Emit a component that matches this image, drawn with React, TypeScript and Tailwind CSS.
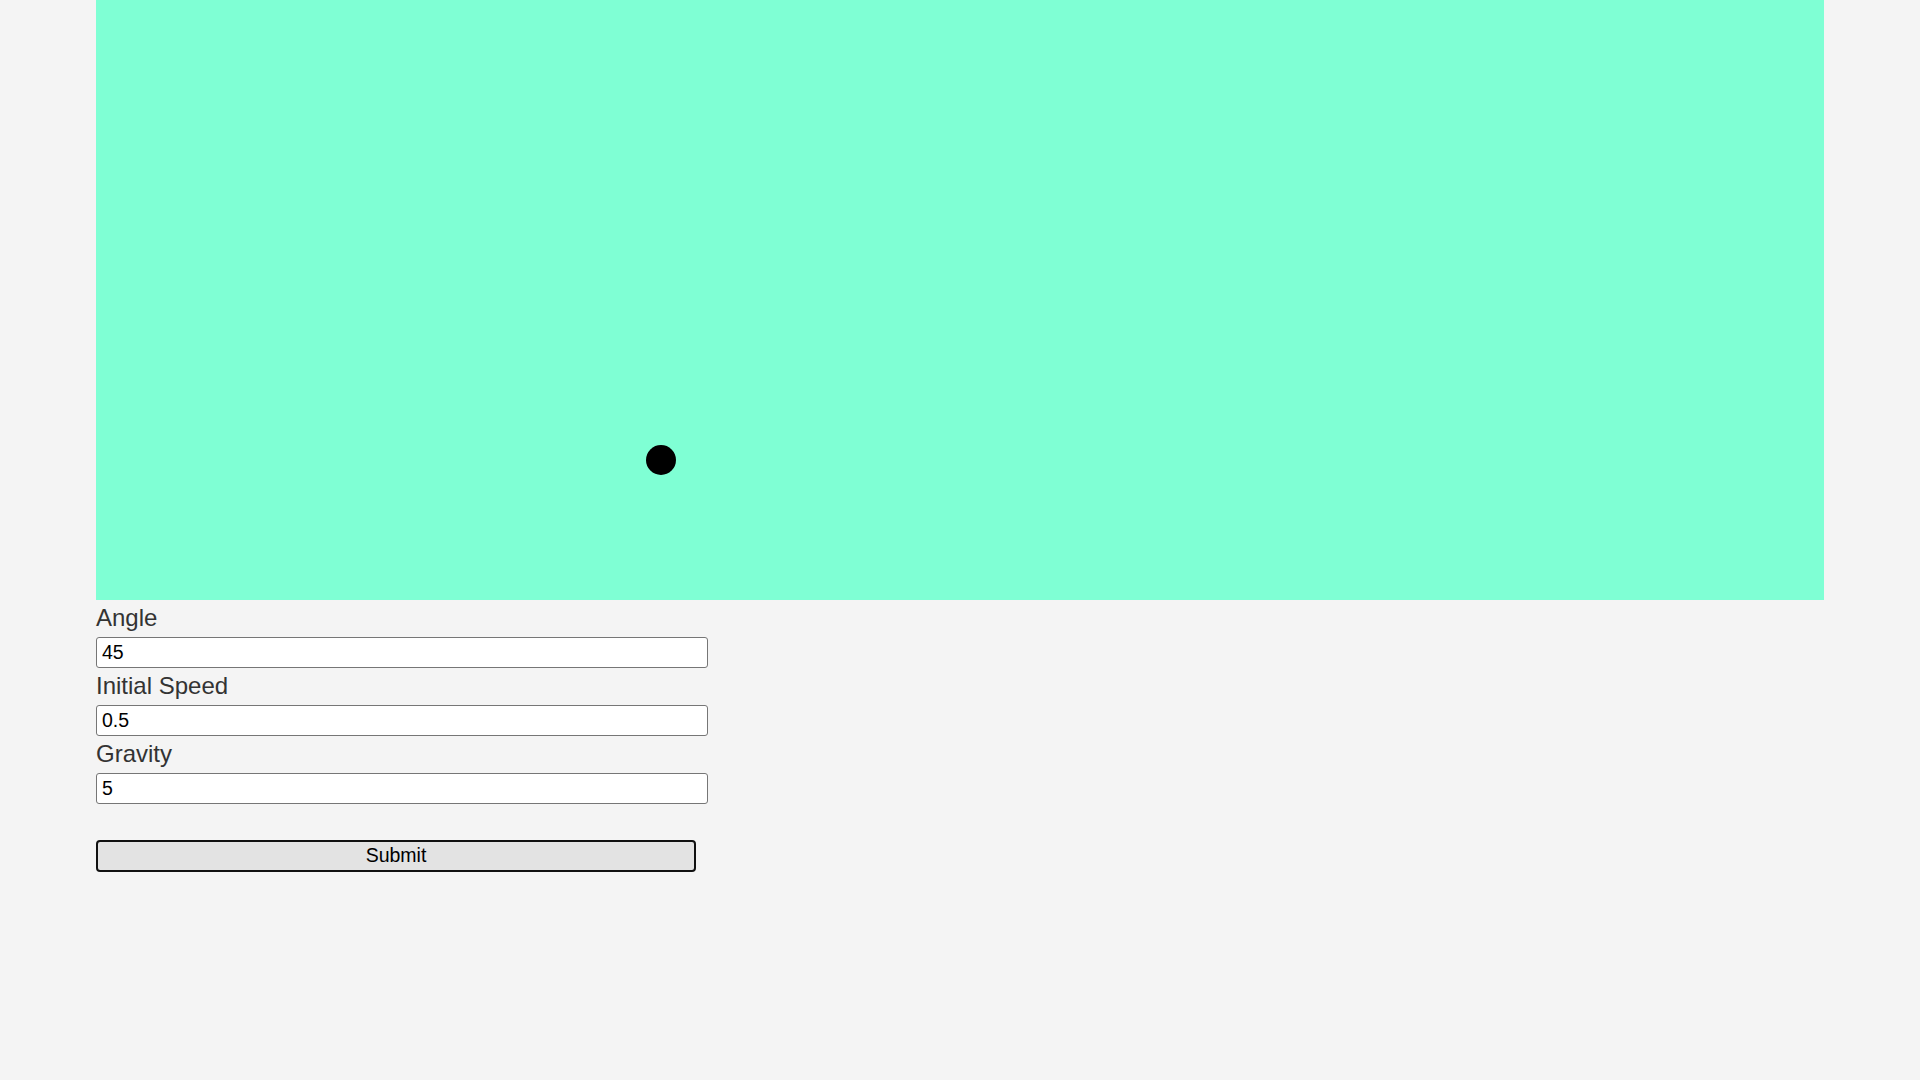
import React from "react";

export default function App() {
  const fields = [
    { label: "Angle", value: "45" },
    { label: "Initial Speed", value: "0.5" },
    { label: "Gravity", value: "5" },
  ];
  return (
    <div className="min-h-screen w-full bg-[#f4f4f4]" style={{ fontFamily: '"Liberation Sans", Arial, sans-serif' }}>
      <div className="mx-auto w-[1728px]">
        <div className="relative h-[600px] w-full bg-[#7fffd4]">
          <div className="absolute left-[550px] top-[445px] h-[30px] w-[30px] rounded-full bg-black" />
        </div>
        <form className="flex flex-col" onSubmit={(e) => e.preventDefault()}>
          {fields.map((f) => (
            <div key={f.label} className="flex flex-col">
              <label className="block pb-[2px] text-[24px] leading-[35px] text-[#333333]">{f.label}</label>
              <input
                type="text"
                defaultValue={f.value}
                className="box-border block h-[31px] w-[612px] rounded-[3px] border border-[#767676] bg-white px-[5px] text-[19.5px] text-black outline-none"
              />
            </div>
          ))}
          <div className="h-[36px]" />
          <button
            type="submit"
            className="box-border h-[32px] w-[600px] rounded-[4px] border-2 border-[#111111] bg-[#e3e3e3] text-[19.5px] leading-none text-black"
          >
            Submit
          </button>
        </form>
      </div>
    </div>
  );
}
